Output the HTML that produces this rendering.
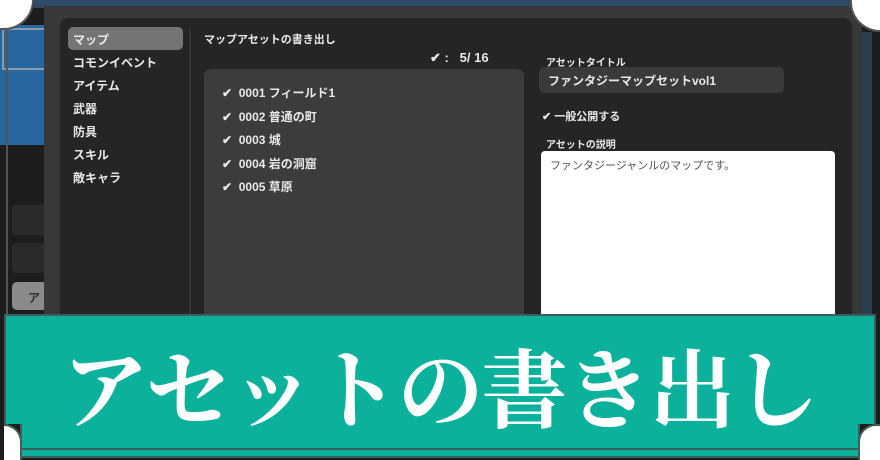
<!DOCTYPE html>
<html><head><meta charset="utf-8"><style>
*{margin:0;padding:0;box-sizing:border-box}
body{width:880px;height:460px;overflow:hidden;background:#fff;position:relative;font-family:"Liberation Sans","Noto Sans CJK JP",sans-serif;color:#e8e8e8;font-weight:bold}
.a{position:absolute}
</style></head><body>
<div class="a" style="left:0;top:0;width:880px;height:460px;background:#1d1d1d"></div>
<div class="a" style="left:34px;top:0;width:820px;height:8px;background:#2d4a66"></div>
<div class="a" style="left:0;top:25px;width:46px;height:120px;background:#2866a0"></div>
<div class="a" style="left:2px;top:28px;width:44px;height:42px;border:2px solid #8a9aa8;border-right:none"></div>
<div class="a" style="left:12px;top:205px;width:40px;height:30px;background:#2a2a2a;border-radius:4px"></div>
<div class="a" style="left:12px;top:243px;width:40px;height:30px;background:#2a2a2a;border-radius:4px"></div>
<div class="a" style="left:12px;top:282px;width:40px;height:28px;background:#8a8a8a;border-radius:5px;color:#333;font-size:12px;padding:7px 0 0 16px">ア</div>
<div class="a" style="left:0;top:0;width:34px;height:30px;background:#fff;border-bottom-right-radius:30px;border-right:2px solid #555;border-bottom:2px solid #555"></div>
<div class="a" style="left:6px;top:30px;width:2px;height:430px;background:#555"></div>
<div class="a" style="left:44px;top:6px;width:818px;height:320px;background:#383838"></div>
<div class="a" style="left:60px;top:18px;width:792px;height:300px;background:#252525;border-radius:8px 8px 0 0"></div>
<div class="a" style="left:850px;top:0;width:30px;height:32px;background:#fff;border-bottom-left-radius:30px;border-left:2px solid #555;border-bottom:2px solid #555"></div>
<div class="a" style="left:862px;top:32px;width:10px;height:290px;background:#2a3e50"></div>
<div class="a" style="left:189px;top:30px;width:2px;height:290px;background:#333"></div>
<div class="a" style="left:68px;top:27px;width:115px;height:23px;background:#747474;border-radius:5px"></div>
<div class="a" style="left:73px;top:29px;font-size:12px;line-height:23px">マップ<br>コモンイベント<br>アイテム<br>武器<br>防具<br>スキル<br>敵キャラ</div>
<div class="a" style="left:204px;top:31px;font-size:11px">マップアセットの書き出し</div>
<div class="a" style="left:430px;top:50px;font-size:13px">✔︎ :&nbsp;&nbsp;&nbsp;5/ 16</div>
<div class="a" style="left:204px;top:69px;width:320px;height:260px;background:#3c3c3c;border-radius:7px"></div>
<div class="a" style="left:222px;top:82px;font-size:12px;line-height:23.5px">✔&nbsp; 0001 フィールド1<br>✔&nbsp; 0002 普通の町<br>✔&nbsp; 0003 城<br>✔&nbsp; 0004 岩の洞窟<br>✔&nbsp; 0005 草原</div>
<div class="a" style="left:546px;top:54px;font-size:10px">アセットタイトル</div>
<div class="a" style="left:539px;top:67px;width:245px;height:26px;background:#3a3a3a;border-radius:5px;font-size:12px;padding:5px 0 0 9px">ファンタジーマップセットvol1</div>
<div class="a" style="left:542px;top:108px;font-size:11px">✔ 一般公開する</div>
<div class="a" style="left:546px;top:136px;font-size:10px">アセットの説明</div>
<div class="a" style="left:541px;top:151px;width:294px;height:180px;background:#fff;border-radius:4px;color:#555;font-size:11px;font-weight:normal;padding:6px 0 0 9px">ファンタジージャンルのマップです。</div>
<div class="a" style="left:4px;top:314px;width:872px;height:110px;background:#0bb19a;border:2px solid #3b5f5a;border-bottom:none"></div>
<div class="a" style="left:20px;top:424px;width:840px;height:34px;background:#0bb19a;border:2px solid #3b5f5a;border-top:none"></div>
<div class="a" style="left:4px;top:424px;width:18px;height:36px;background:#fff;border-top:2px solid #3b5f5a;border-right:2px solid #3b5f5a;border-top-right-radius:18px"></div>
<div class="a" style="left:858px;top:424px;width:22px;height:36px;background:#fff;border-top:2px solid #3b5f5a;border-left:2px solid #3b5f5a;border-top-left-radius:18px"></div>
<div class="a" style="left:22px;top:448px;width:836px;height:2px;background:#3b5f5a"></div>
<div class="a" style="left:0;top:334px;width:880px;text-align:center;font-family:'Noto Serif CJK SC','Liberation Serif',serif;font-size:86px;line-height:100px;color:#fff;font-weight:bold;letter-spacing:-2px">アセットの書き出し</div>
</body></html>
